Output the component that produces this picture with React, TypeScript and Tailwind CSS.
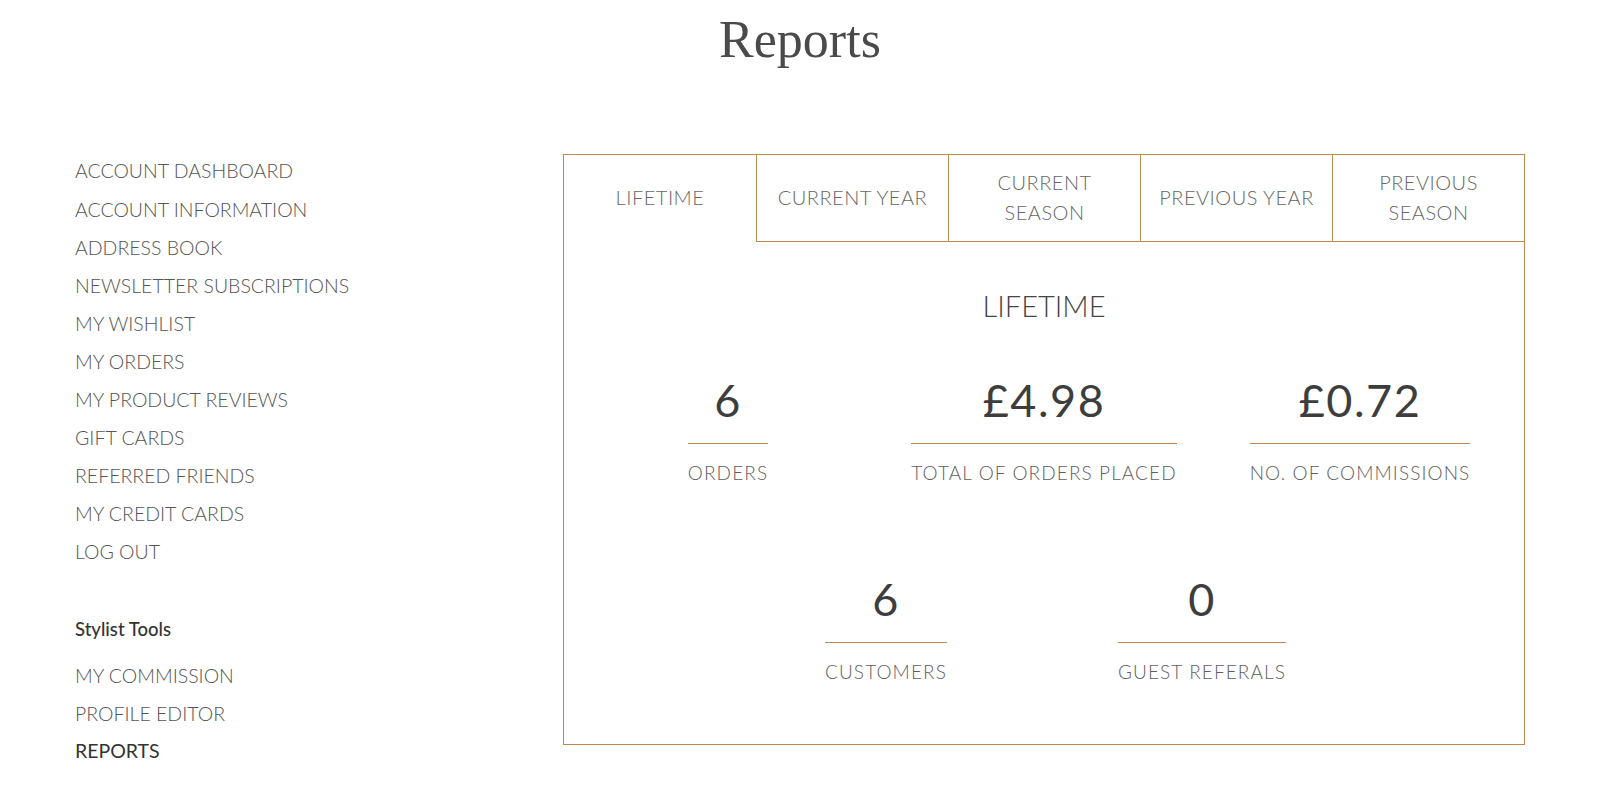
import React from "react";

const accountLinks = [
  "ACCOUNT DASHBOARD",
  "ACCOUNT INFORMATION",
  "ADDRESS BOOK",
  "NEWSLETTER SUBSCRIPTIONS",
  "MY WISHLIST",
  "MY ORDERS",
  "MY PRODUCT REVIEWS",
  "GIFT CARDS",
  "REFERRED FRIENDS",
  "MY CREDIT CARDS",
  "LOG OUT",
];

const stylistLinks = ["MY COMMISSION", "PROFILE EDITOR", "REPORTS"];

const tabs = [
  ["LIFETIME"],
  ["CURRENT YEAR"],
  ["CURRENT", "SEASON"],
  ["PREVIOUS YEAR"],
  ["PREVIOUS", "SEASON"],
];

function Stat({ value, label }: { value: string; label: string }) {
  return (
    <div className="flex w-[316px] justify-center">
      <div className="flex w-fit flex-col items-stretch text-center">
        <div className="text-[45px] leading-[44px] font-normal tracking-[1.5px] text-[#3d3d3d]">{value}</div>
        <div className="mt-[21px] h-px bg-[#bf8a4f]" />
        <div className="mt-[17px] whitespace-nowrap text-[19px] leading-[24px] font-light tracking-[1.1px] text-[#5e5e5e]">
          {label}
        </div>
      </div>
    </div>
  );
}

export default function App() {
  const active = 0;
  return (
    <div className="min-h-screen bg-white font-['Lato',sans-serif]">
      <h1 className="pt-[14px] text-center font-['Liberation_Serif',serif] text-[52px] leading-none font-normal text-[#4a4a4a]">
        Reports
      </h1>

      <div className="mt-[85px] flex px-[75px]">
        {/* sidebar */}
        <aside className="w-[488px] shrink-0">
          <ul className="pt-[1px]">
            {accountLinks.map((l) => (
              <li key={l} className="flex h-[38.1px] items-center text-[19.5px] font-light text-[#555]">
                {l}
              </li>
            ))}
          </ul>
          <div className="mt-[46px] text-[18.5px] leading-[24px] font-medium text-[#333]">Stylist Tools</div>
          <ul className="mt-[16px]">
            {stylistLinks.map((l) => (
              <li
                key={l}
                className={`flex h-[37.5px] items-center text-[19.5px] ${
                  l === "REPORTS" ? "font-normal text-[#333]" : "font-light text-[#555]"
                }`}
              >
                {l}
              </li>
            ))}
          </ul>
        </aside>

        {/* report panel */}
        <section className="mt-[3px] h-[591px] flex-1 border border-[#bf8a4f]">
          <div className="grid grid-cols-5">
            {tabs.map((t, i) => (
              <div
                key={i}
                className={`flex h-[87px] flex-col items-center justify-center pb-[3px] text-[20px] leading-[30px] font-light tracking-[0.5px] text-[#666] ${
                  i > 0 ? "border-l border-[#bf8a4f]" : ""
                } ${i !== active ? "border-b border-[#bf8a4f]" : ""}`}
              >
                {t.map((line) => (
                  <span key={line}>{line}</span>
                ))}
              </div>
            ))}
          </div>

          <h2 className="mt-[46px] text-center text-[29px] leading-[36px] font-light text-[#444]">LIFETIME</h2>

          <div className="mt-[54px] flex justify-center">
            <Stat value="6" label="ORDERS" />
            <Stat value="£4.98" label="TOTAL OF ORDERS PLACED" />
            <Stat value="£0.72" label="NO. OF COMMISSIONS" />
          </div>
          <div className="mt-[92px] flex justify-center">
            <Stat value="6" label="CUSTOMERS" />
            <Stat value="0" label="GUEST REFERALS" />
          </div>
        </section>
      </div>
    </div>
  );
}
